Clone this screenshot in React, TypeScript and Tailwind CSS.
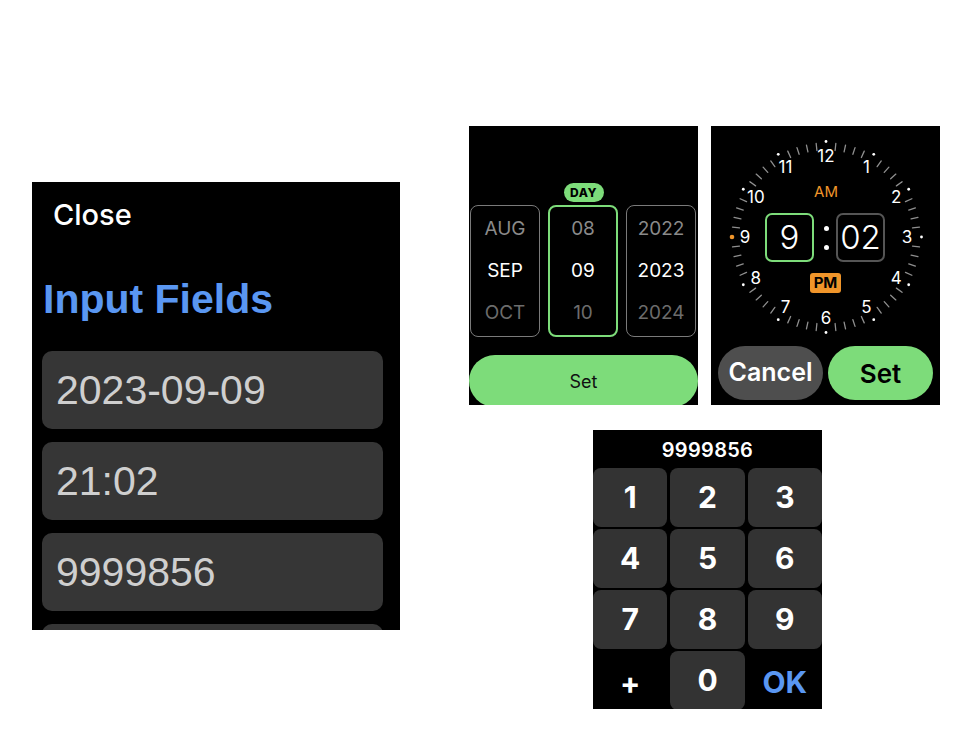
import React from "react";

const inter = "font-['Inter','Noto_Sans',sans-serif]";
const lib = "font-['Liberation_Sans',Arial,sans-serif]";

function FieldsPanel() {
  const fields = ["2023-09-09", "21:02", "9999856", ""];
  return (
    <div className="w-[368px] h-[448px] bg-black overflow-hidden flex flex-col">
      <div className={`h-[66px] shrink-0 flex items-center pl-[21px] text-white text-[29px] font-medium ${inter}`}>Close</div>
      <div className={`mt-[28px] h-[46px] shrink-0 flex items-center pl-[11px] text-[41px] font-bold text-[#5a97f2] leading-none ${lib}`}>
        Input Fields
      </div>
      <div className="mt-[29px] shrink-0 pl-[10px] pr-[17px] flex flex-col gap-[13px]">
        {fields.map((f, i) => (
          <div key={i} className={`h-[78px] shrink-0 rounded-[10px] bg-[#363636] flex items-center pl-[14px] text-[41px] text-[#cfcfcf] leading-none ${lib}`}>
            {f}
          </div>
        ))}
      </div>
    </div>
  );
}

function DatePanel() {
  const cols = [
    { items: ["AUG", "SEP", "OCT"], active: false },
    { items: ["08", "09", "10"], active: true },
    { items: ["2022", "2023", "2024"], active: false },
  ];
  return (
    <div className={`w-[229px] h-[279px] bg-black overflow-hidden flex flex-col ${inter}`}>
      <div className="pt-[57px] shrink-0 flex justify-center">
        <div className="h-[19px] w-[40px] rounded-full bg-[#7ddc7a] flex items-center justify-center text-[12px] font-extrabold text-black tracking-[0.5px]">
          DAY
        </div>
      </div>
      <div className="mt-[3px] shrink-0 flex gap-[8px] pl-[1px]">
        {cols.map((c, i) => (
          <div
            key={i}
            className={`w-[70px] h-[132px] rounded-[8px] flex flex-col justify-center items-center ${
              c.active ? "border-2 border-[#7ddc7a]" : "border-[1.5px] border-[#7a7a7a]"
            }`}
          >
            <div className="h-[42px] flex items-center text-[19px] text-[#8a8a8a]">{c.items[0]}</div>
            <div className="h-[42px] flex items-center text-[19px] text-white">{c.items[1]}</div>
            <div className="h-[42px] flex items-center text-[19px] text-[#6c6c6c]">{c.items[2]}</div>
          </div>
        ))}
      </div>
      <div className="mt-[18px] h-[52px] shrink-0 rounded-full bg-[#7ddc7a] flex items-center justify-center text-[18px] text-[#111]">
        Set
      </div>
    </div>
  );
}

function Dial() {
  const cx = 115;
  const cy = 111;
  const marks = [];
  for (let i = 0; i < 60; i++) {
    const a = (i * 6 * Math.PI) / 180;
    const sx = Math.sin(a);
    const sy = -Math.cos(a);
    if (i % 5 === 0) {
      const orange = i === 45;
      marks.push(
        <circle
          key={i}
          cx={cx + sx * (orange ? 94 : 95.5)}
          cy={cy + sy * (orange ? 94 : 95.5)}
          r={orange ? 2.3 : 1.4}
          fill={orange ? "#f0952a" : "#ffffff"}
        />
      );
    } else {
      marks.push(
        <line
          key={i}
          x1={cx + sx * 87}
          y1={cy + sy * 87}
          x2={cx + sx * 94}
          y2={cy + sy * 94}
          stroke="#8f8f8f"
          strokeWidth={1.3}
          strokeLinecap="round"
        />
      );
    }
  }
  const nums = [];
  for (let h = 1; h <= 12; h++) {
    const a = (h * 30 * Math.PI) / 180;
    const r = 81;
    nums.push(
      <text
        key={h}
        x={cx + Math.sin(a) * r}
        y={cy - Math.cos(a) * r}
        textAnchor="middle"
        dominantBaseline="central"
        fill="#ffffff"
        fontSize="17"
        fontFamily="Inter, 'Noto Sans', sans-serif"
      >
        {h}
      </text>
    );
  }
  return (
    <svg width="229" height="220" viewBox="0 0 229 220" className="absolute left-0 top-0">
      {marks}
      {nums}
    </svg>
  );
}

function TimePanel() {
  return (
    <div className={`w-[229px] h-[279px] bg-black overflow-hidden flex flex-col ${inter}`}>
      <div className="relative h-[220px] shrink-0">
        <Dial />
        <div className="absolute left-[93px] top-[56px] w-[44px] h-[20px] flex items-center justify-center text-[15px] text-[#f0952a]">
          AM
        </div>
        <div className="absolute left-[54px] top-[87px] w-[49px] h-[49px] rounded-[7px] border-2 border-[#7ddc7a] flex items-center justify-center text-[33px] text-white font-light">
          9
        </div>
        <div className="absolute left-[111px] top-[100px] w-[8px] h-[24px] flex flex-col items-center justify-between">
          <div className="w-[5px] h-[5px] rounded-full bg-white" />
          <div className="w-[5px] h-[5px] rounded-full bg-white" />
        </div>
        <div className="absolute left-[125px] top-[87px] w-[49px] h-[49px] rounded-[7px] border-2 border-[#555555] flex items-center justify-center text-[33px] text-white font-light">
          02
        </div>
        <div className="absolute left-[99px] top-[147px] w-[31px] h-[20px] rounded-[3px] bg-[#f0952a] flex items-center justify-center text-[15px] font-bold text-black">
          PM
        </div>
      </div>
      <div className="flex gap-[5px] px-[7px] shrink-0">
        <div className="w-[105px] h-[54px] rounded-full bg-[#4e4e4e] flex items-center justify-center text-[25px] font-semibold text-white">
          Cancel
        </div>
        <div className="w-[105px] h-[54px] rounded-full bg-[#7ddc7a] flex items-center justify-center text-[26px] font-semibold text-black">
          Set
        </div>
      </div>
    </div>
  );
}

function KeypadPanel() {
  const keys = ["1", "2", "3", "4", "5", "6", "7", "8", "9"];
  return (
    <div className={`w-[229px] h-[279px] bg-black overflow-hidden flex flex-col ${inter}`}>
      <div className="h-[38px] shrink-0 flex items-center justify-center pt-[2px] text-[20px] font-semibold text-white tracking-[0.3px]">
        9999856
      </div>
      <div className="grid grid-cols-3 gap-x-[3px] gap-y-[2px] auto-rows-[59px] shrink-0">
        {keys.map((k) => (
          <div key={k} className="rounded-[8px] bg-[#333333] flex items-center justify-center text-[30px] font-bold text-white">
            {k}
          </div>
        ))}
        <div className="flex items-center justify-center pt-[6px] text-[30px] font-bold text-white">+</div>
        <div className="rounded-[8px] bg-[#333333] flex items-center justify-center text-[30px] font-bold text-white">0</div>
        <div className="flex items-center justify-center pt-[4px] text-[30px] font-bold text-[#5a97f2]">OK</div>
      </div>
    </div>
  );
}

export default function App() {
  return (
    <div className="w-[966px] h-[743px] bg-white flex items-start">
      <div className="ml-[32px] mt-[182px]">
        <FieldsPanel />
      </div>
      <div className="ml-[69px] mt-[126px] flex flex-col">
        <div className="flex gap-[13px]">
          <DatePanel />
          <TimePanel />
        </div>
        <div className="mt-[25px] ml-[124px]">
          <KeypadPanel />
        </div>
      </div>
    </div>
  );
}
